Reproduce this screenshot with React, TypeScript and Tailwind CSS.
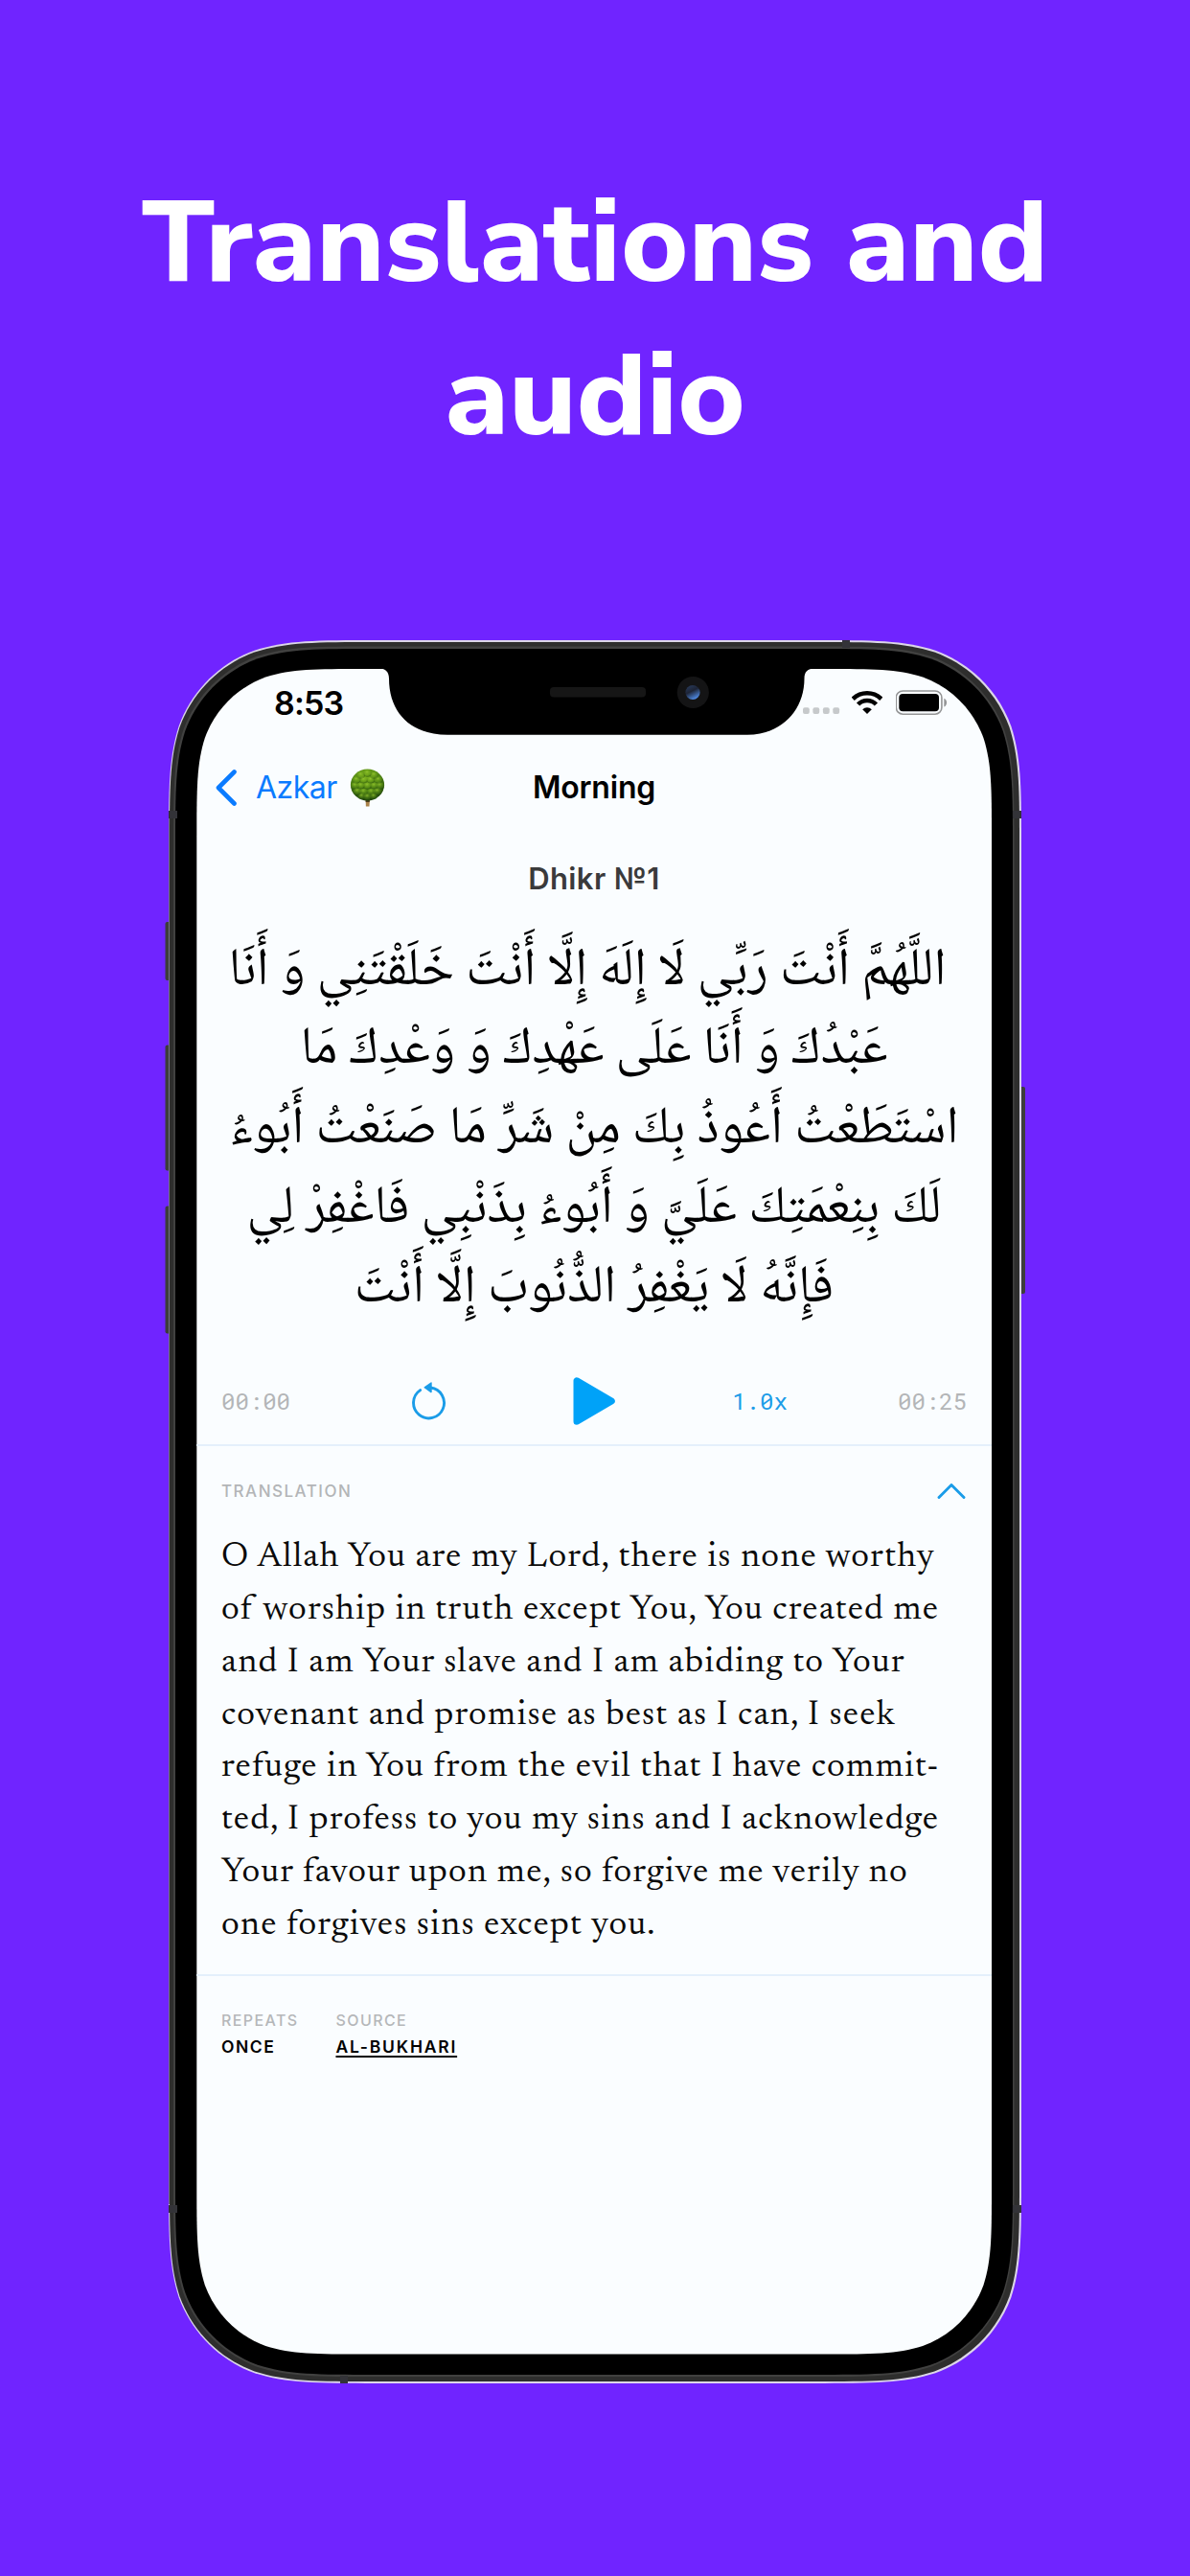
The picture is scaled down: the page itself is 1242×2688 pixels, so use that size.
import type { ReactNode } from "react";

const ARABIC_LINES = [
  "اللَّهُمَّ أَنْتَ رَبِّي لَا إِلَهَ إِلَّا أَنْتَ خَلَقْتَنِي وَ أَنَا",
  "عَبْدُكَ وَ أَنَا عَلَى عَهْدِكَ وَ وَعْدِكَ مَا",
  "اسْتَطَعْتُ أَعُوذُ بِكَ مِنْ شَرِّ مَا صَنَعْتُ أَبُوءُ",
  "لَكَ بِنِعْمَتِكَ عَلَيَّ وَ أَبُوءُ بِذَنْبِي فَاغْفِرْ لِي",
  "فَإِنَّهُ لَا يَغْفِرُ الذُّنُوبَ إِلَّا أَنْتَ",
];

const TRANSLATION_LINES = [
  "O Allah You are my Lord, there is none worthy",
  "of worship in truth except You, You created me",
  "and I am Your slave and I am abiding to Your",
  "covenant and promise as best as I can, I seek",
  "refuge in You from the evil that I have commit-",
  "ted, I profess to you my sins and I acknowledge",
  "Your favour upon me, so forgive me verily no",
  "one forgives sins except you.",
];

/* Rounded rectangle with continuous-curvature corners. */
function squircle(x0: number, y0: number, x1: number, y1: number, r: number) {
  const a = 1.528665 * r;
  const b = 1.088493 * r;
  const c = 0.868407 * r;
  const d = 0.631494 * r;
  const e = 0.074911 * r;
  const f = 0.372824 * r;
  const g = 0.16906 * r;
  return [
    `M${x0 + a} ${y0}H${x1 - a}`,
    `C${x1 - b} ${y0} ${x1 - c} ${y0} ${x1 - d} ${y0 + e}`,
    `C${x1 - f} ${y0 + g} ${x1 - g} ${y0 + f} ${x1 - e} ${y0 + d}`,
    `C${x1} ${y0 + c} ${x1} ${y0 + b} ${x1} ${y0 + a}`,
    `V${y1 - a}`,
    `C${x1} ${y1 - b} ${x1} ${y1 - c} ${x1 - e} ${y1 - d}`,
    `C${x1 - g} ${y1 - f} ${x1 - f} ${y1 - g} ${x1 - d} ${y1 - e}`,
    `C${x1 - c} ${y1} ${x1 - b} ${y1} ${x1 - a} ${y1}`,
    `H${x0 + a}`,
    `C${x0 + b} ${y1} ${x0 + c} ${y1} ${x0 + d} ${y1 - e}`,
    `C${x0 + f} ${y1 - g} ${x0 + g} ${y1 - f} ${x0 + e} ${y1 - d}`,
    `C${x0} ${y1 - c} ${x0} ${y1 - b} ${x0} ${y1 - a}`,
    `V${y0 + a}`,
    `C${x0} ${y0 + b} ${x0} ${y0 + c} ${x0 + e} ${y0 + d}`,
    `C${x0 + g} ${y0 + f} ${x0 + f} ${y0 + g} ${x0 + d} ${y0 + e}`,
    `C${x0 + c} ${y0} ${x0 + b} ${y0} ${x0 + a} ${y0}Z`,
  ].join("");
}

function DeviceFrame() {
  return (
    <svg className="absolute inset-0 h-full w-full" viewBox="171 668 900 1819" fill="none" aria-hidden="true">
      <defs>
        <linearGradient id="lens" x1="0" x2="0.5" y1="0" y2="1">
          <stop offset="0" stopColor="#2b3f63" />
          <stop offset="0.5" stopColor="#1d2436" />
          <stop offset="1" stopColor="#4d86dd" />
        </linearGradient>
      </defs>
      {/* side buttons */}
      <g fill="#3d3d3b">
        <rect x="172.5" y="962" width="8" height="61" rx="2" />
        <rect x="172.5" y="1090.5" width="8" height="131" rx="2" />
        <rect x="172.5" y="1258.5" width="8" height="133" rx="2" />
        <rect x="1062" y="1134" width="8" height="216" rx="2" />
      </g>
      {/* metal band */}
      <path d={squircle(176, 668, 1066, 2487, 142)} fill="#dcd6e8" />
      <path d="M176 850H178V2300H176Z" fill="#77738a" />
      <path d={squircle(177, 670, 1064, 2485, 140.5)} fill="#2e2e2d" />
      <path d={squircle(181, 674.5, 1058.5, 2480, 138)} fill="#414140" />
      <path d={squircle(183, 677, 1057, 2478, 136)} fill="#000" />
      {/* antenna seams */}
      <g fill="#333338">
        <rect x="176" y="846" width="9" height="8" />
        <rect x="1057" y="846" width="9" height="8" />
        <rect x="176" y="2301" width="9" height="8" />
        <rect x="1057" y="2301" width="9" height="8" />
        <rect x="879" y="668" width="8" height="8" />
        <rect x="355" y="2479" width="8" height="8" />
      </g>
      {/* display */}
      <path d={squircle(205.3, 698, 1035, 2456.5, 114)} fill="#fafdff" />
      <path
        d="M395 697.5H396.5C402 697.5 406 701 406 708C406 745 430 766.7 467 766.7H780C816 766.7 839.5 741 839.5 708C839.5 701 843 697.5 850 697.5V690H395Z"
        fill="#000"
      />
      <rect x="574" y="717" width="100" height="10.5" rx="4" fill="#161616" />
      <circle cx="723.3" cy="722.5" r="16.6" fill="#141415" />
      <circle cx="723" cy="722.5" r="7.6" fill="url(#lens)" />
    </svg>
  );
}

function StatusIcons() {
  return (
    <div className="flex items-center">
      <svg className="mr-3" width="39" height="26" viewBox="838 720 39 26" fill="#c6c9cb" aria-label="No signal">
        <rect x="838" y="738.3" width="6.8" height="6.8" rx="2" />
        <rect x="848.4" y="738.3" width="6.8" height="6.8" rx="2" />
        <rect x="858.9" y="738.3" width="6.8" height="6.8" rx="2" />
        <rect x="869.3" y="738.3" width="6.8" height="6.8" rx="2" />
      </svg>
      <svg className="mr-3.5" width="32" height="26" viewBox="889 720 32 26" fill="none" stroke="#000" aria-label="Wi-Fi">
        <path d="M890.2 729.3A21 21 0 0 1 919.8 729.3" strokeWidth="4.6" />
        <path d="M895.6 735A13 13 0 0 1 914.4 735" strokeWidth="4.6" />
        <path d="M900.2 740.2A7 7 0 0 1 909.8 740.2L905 745Z" fill="#000" stroke="none" />
      </svg>
      <svg width="54" height="26" viewBox="935 720 54 26" fill="none" aria-label="Battery full">
        <rect x="935.3" y="721" width="47.6" height="24.2" rx="7" stroke="#949596" strokeWidth="1.6" />
        <rect x="938.3" y="724" width="41.7" height="18.2" rx="4" fill="#000" />
        <path d="M985.3 728.8C989 730 989 736.4 985.3 737.6Z" fill="#949596" />
      </svg>
    </div>
  );
}

const LEAVES: [number, number, number][] = [
  [18, 5, 4.5], [11, 7, 4.5], [25, 7, 4.5], [6.5, 12, 4.5], [14, 12, 4.2], [21.5, 12, 4.2], [29.5, 12, 4.5],
  [5, 18, 4.5], [11, 18, 4.2], [18, 18, 4.4], [25, 18, 4.2], [31, 18, 4.5], [7.5, 24, 4.5], [14, 24.5, 4.5],
  [22, 24.5, 4.5], [28.5, 24, 4.5], [12, 29, 3.6], [18, 29.5, 4], [24.5, 29, 3.6],
];

function Tree() {
  return (
    <svg width="37" height="40" viewBox="0 0 36 40" role="img" aria-label="🌳">
      <defs>
        <radialGradient id="crown" cx="0.45" cy="0.25" r="0.75">
          <stop offset="0" stopColor="#7fb51d" />
          <stop offset="0.55" stopColor="#4f8513" />
          <stop offset="1" stopColor="#1f450b" />
        </radialGradient>
        <radialGradient id="leaf" cx="0.45" cy="0.3" r="0.65">
          <stop offset="0" stopColor="#a2d334" stopOpacity="0.7" />
          <stop offset="0.6" stopColor="#6a9f1b" stopOpacity="0.3" />
          <stop offset="1" stopColor="#20480a" stopOpacity="0.6" />
        </radialGradient>
      </defs>
      <path d="M16 29H20.6L20 39.6H16.4Z" fill="#a9824a" />
      <path d="M16 31H20.6L20.2 35H16.2Z" fill="#4b3a1c" />
      <ellipse cx="18" cy="17" rx="17.6" ry="16.4" fill="url(#crown)" />
      {LEAVES.map(([x, y, r]) => (
        <ellipse key={`${x}-${y}`} cx={x} cy={y} rx={r} ry={r * 0.85} fill="url(#leaf)" />
      ))}
    </svg>
  );
}

function Caption({ children }: { children: ReactNode }) {
  return <span className="text-[16px] leading-[27px] font-[450] tracking-[1.4px] text-[#b5b7b9]">{children}</span>;
}

export default function App() {
  return (
    <main className="flex h-[2688px] w-[1242px] flex-col items-center overflow-hidden bg-[#7024ff] pt-[174px] font-['Inter','Liberation_Sans',sans-serif]">
      <h1 className="h-[494px] w-[1000px] text-center font-['Nunito_Sans','Open_Sans',sans-serif] text-[120px] leading-[160px] font-extrabold text-white">
        Translations and audio
      </h1>

      <div className="relative h-[1819px] w-[900px] pt-[30px] pr-[36px] pl-[34px]">
        <DeviceFrame />
        <div className="relative flex h-[1758px] flex-col text-black">
          <div className="flex h-[70px] items-center justify-between pr-[46px] pl-[81px]">
            <span className="text-[34px] font-semibold tracking-[-0.8px]">8:53</span>
            <StatusIcons />
          </div>

          <header className="grid h-[107px] grid-cols-3 items-center text-[32px]">
            <a className="flex items-center pl-5 text-[#0a7bff]">
              <svg className="mr-[18px]" width="24" height="40" viewBox="0 0 24 40" fill="none" stroke="currentColor" strokeWidth="4.6" strokeLinecap="round" strokeLinejoin="round">
                <path d="M19.5 3.5L3 20L19.5 36.5" />
              </svg>
              <span className="mr-[13px] tracking-[-0.5px]">Azkar</span>
              <Tree />
            </a>
            <h2 className="text-center font-semibold tracking-[-0.2px]">Morning</h2>
          </header>

          <h3 className="h-[98.7px] text-center text-[31px] leading-[84px] font-semibold tracking-[0.4px] text-[#3a3a3b]">Dhikr №1</h3>

          <p dir="rtl" className="text-center font-['Noto_Naskh_Arabic','DejaVu_Sans',sans-serif] text-[55px] leading-[82.7px] whitespace-nowrap">
            {ARABIC_LINES.map((line) => (
              <span key={line} className="block first:pr-3.5">
                {line}
              </span>
            ))}
          </p>

          <div className="mt-[30px] flex h-[92px] items-center justify-between border-b-2 border-[#e4f0fb] px-[26px] font-['Roboto_Mono','DejaVu_Sans_Mono',monospace] text-[24px] text-[#b3b5b7]">
            <span>00:00</span>
            <div className="grid w-[519px] grid-cols-3 items-center justify-items-center text-[#1a9ce8]">
              <svg width="38" height="42" viewBox="0 0 38 42" fill="none" stroke="currentColor" strokeWidth="2.9" strokeLinecap="round">
                <path d="M10.6 9.6A16 16 0 1 0 21.5 7" />
                <path d="M15.2 6.8L22 2V11.6Z" fill="currentColor" strokeWidth="1.4" strokeLinejoin="round" />
              </svg>
              <svg width="44" height="50" viewBox="0 0 44 50" fill="#00a2f8" stroke="#00a2f8" strokeWidth="7" strokeLinejoin="round">
                <path d="M4 3.8V46.2L40.3 25Z" />
              </svg>
              <span>1.0x</span>
            </div>
            <span>00:25</span>
          </div>

          <div className="flex h-[96px] items-center justify-between px-[26px]">
            <span className="text-[17px] font-[450] tracking-[1.5px] text-[#b3b5b7]">TRANSLATION</span>
            <svg className="mr-px" width="30" height="18" viewBox="0 0 30 18" fill="none" stroke="#1a9ce8" strokeWidth="2.9" strokeLinecap="round" strokeLinejoin="round">
              <path d="M2 14.5L15 1.5L28 14.5" />
            </svg>
          </div>

          <p className="-mt-1.5 h-[463px] border-b-2 border-[#e4f0fb] px-[26px] font-['Newsreader','Liberation_Serif',serif] text-[37px] leading-[54.8px] tracking-[1.15px] whitespace-nowrap text-[#0a0a0a]">
            {TRANSLATION_LINES.map((line) => (
              <span key={line} className="block">
                {line}
              </span>
            ))}
          </p>

          <dl className="flex gap-[39px] px-[26px] pt-[33px]">
            <div className="flex flex-col">
              <Caption>REPEATS</Caption>
              <span className="text-[17.5px] leading-7 font-semibold tracking-[1.5px]">ONCE</span>
            </div>
            <div className="flex flex-col items-start">
              <Caption>SOURCE</Caption>
              <span className="text-[17.5px] leading-7 font-semibold tracking-[1.8px] underline decoration-2 underline-offset-[3px]">AL-BUKHARI</span>
            </div>
          </dl>
        </div>
      </div>
    </main>
  );
}
